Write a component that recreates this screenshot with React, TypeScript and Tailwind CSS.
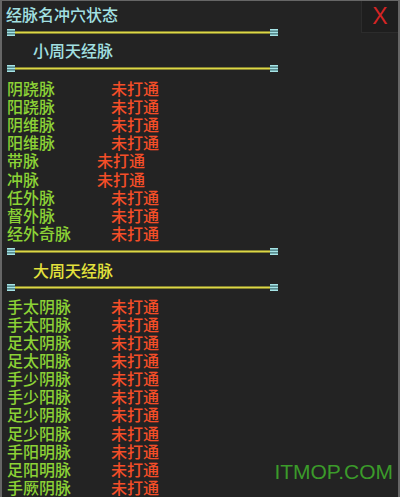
const cjk = { fontFamily: '"Noto Sans CJK SC", "Noto Sans", sans-serif' };

type Row = { name: string; gap: number };

const small: Row[] = [
  { name: "阴跷脉", gap: 104 },
  { name: "阳跷脉", gap: 104 },
  { name: "阴维脉", gap: 104 },
  { name: "阳维脉", gap: 104 },
  { name: "带脉", gap: 90 },
  { name: "冲脉", gap: 90 },
  { name: "任外脉", gap: 104 },
  { name: "督外脉", gap: 104 },
  { name: "经外奇脉", gap: 104 },
];

const big: Row[] = [
  "手太阴脉",
  "手太阳脉",
  "足太阴脉",
  "足太阳脉",
  "手少阴脉",
  "手少阳脉",
  "足少阴脉",
  "足少阳脉",
  "手阳明脉",
  "足阳明脉",
  "手厥阴脉",
].map((name) => ({ name, gap: 104 }));

function Cap() {
  return (
    <svg width="8" height="7" viewBox="0 0 8 7" className="shrink-0">
      <rect x="0" y="0" width="8" height="7" fill="#3f6f72" />
      <rect x="0" y="0" width="8" height="1.5" fill="#a6e4e6" />
      <rect x="0" y="2.75" width="8" height="1.5" fill="#a6e4e6" />
      <rect x="0" y="5.5" width="8" height="1.5" fill="#a6e4e6" />
    </svg>
  );
}

function Separator({ className }: { className: string }) {
  return (
    <div className={"flex items-center ml-[5px] h-[7px] " + className}>
      <Cap />
      <div className="w-[255px] h-[3px] bg-[#dcd846] border-y border-[#858230]" />
      <Cap />
    </div>
  );
}

function Rows({ rows }: { rows: Row[] }) {
  return (
    <div className="flex flex-col">
      {rows.map((r) => (
        <div key={r.name} className="flex h-[18.1px] items-center pl-[5px] text-[16px] leading-[18px] font-medium">
          <span className="text-[#8cd236] shrink-0" style={{ width: r.gap }}>
            {r.name}
          </span>
          <span className="text-[#f44e28]">未打通</span>
        </div>
      ))}
    </div>
  );
}

export default function App() {
  return (
    <div
      className="relative w-[400px] h-[497px] overflow-hidden bg-[#232323] border-t border-l-2 border-r-2 border-[#666666]"
      style={cjk}
    >
      <div className="absolute top-0 right-0 w-[37px] h-[32px] bg-[#1e1e1e] border-l border-b border-[#2c2c2c] flex items-center justify-center">
        <span
          className="text-[#d42424] text-[23px] leading-none"
          style={{ fontFamily: '"Liberation Sans", Arial, sans-serif' }}
        >
          X
        </span>
      </div>

      <div className="pt-[4px] pl-[4px] text-[16px] leading-[18px] font-medium text-[#a2e0e2]">
        经脉名冲穴状态
      </div>
      <Separator className="mt-[6px]" />
      <div className="mt-[5px] pl-[31px] text-[16px] leading-[18px] font-medium text-[#a2e0e2]">
        小周天经脉
      </div>
      <Separator className="mt-[6px]" />
      <div className="mt-[7px]">
        <Rows rows={small} />
      </div>
      <Separator className="mt-[6px]" />
      <div className="mt-[6px] pl-[31px] text-[16px] leading-[18px] font-medium text-[#e4e23c]">
        大周天经脉
      </div>
      <Separator className="mt-[5px]" />
      <div className="mt-[6px]">
        <Rows rows={big} />
      </div>

      <div
        className="absolute right-[5px] top-[460px] text-[21px] leading-none text-[#3b9b2a]"
        style={{ fontFamily: '"Liberation Sans", Arial, sans-serif' }}
      >
        ITMOP.COM
      </div>
    </div>
  );
}
